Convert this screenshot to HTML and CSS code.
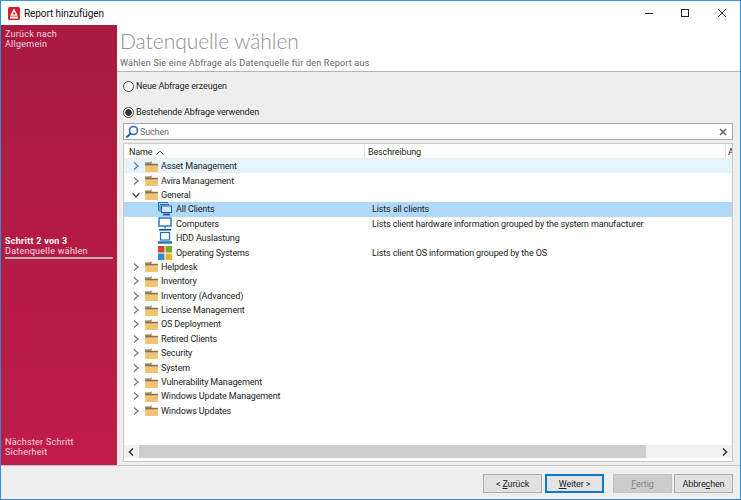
FILE: index.html
```html
<!DOCTYPE html>
<html lang="de">
<head>
<meta charset="utf-8">
<title>Report hinzufügen</title>
<link rel="stylesheet" href="styles.css">
</head>
<body>
<div class="window">
  <header class="titlebar">
    <svg class="app-icon" width="12" height="13" viewBox="0 0 12 13"><rect width="12" height="13" rx="1.5" fill="#d8202a"/><path d="M6 1.5L2.2 8.8H9.8ZM6 4.4L4.5 7.4H7.5Z" fill="#fff" fill-rule="evenodd"/><rect x="2" y="9.5" width="8" height="2" fill="#fff"/></svg>
    <span class="title">Report hinzufügen</span>
    <div class="winctl">
      <svg width="10" height="10" viewBox="0 0 10 10"><path d="M0 5.5H8" stroke="#222" fill="none"/></svg>
      <svg width="10" height="10" viewBox="0 0 10 10"><rect x=".5" y="1.5" width="7" height="7" stroke="#222" fill="none"/></svg>
      <svg width="10" height="10" viewBox="0 0 10 10"><path d="M1 1L9 9M9 1L1 9" stroke="#333" fill="none"/></svg>
    </div>
  </header>
  <div class="main">
    <aside class="sidebar">
      <div class="side-block"><div>Zurück nach</div><div>Allgemein</div></div>
      <div class="side-current"><div class="side-strong">Schritt 2 von 3</div><div>Datenquelle wählen</div></div>
      <div class="side-block"><div>Nächster Schritt</div><div>Sicherheit</div></div>
    </aside>
    <section class="content">
      <div class="head">
        <h1>Datenquelle wählen</h1>
        <p>Wählen Sie eine Abfrage als Datenquelle für den Report aus</p>
      </div>
      <div class="body">
        <label class="radio first"><span class="dot"></span>Neue Abfrage erzeugen</label>
        <label class="radio second"><span class="dot on"></span>Bestehende Abfrage verwenden</label>
        <div class="search">
          <svg width="14" height="14" viewBox="0 0 14 14"><circle cx="8.5" cy="5.5" r="4" fill="none" stroke="#2a6fb0" stroke-width="1.6"/><path d="M5.5 8.5L1.5 12.5" stroke="#1f5f9f" stroke-width="2"/></svg>
          <span class="search-text">Suchen</span>
          <svg class="clear" width="8" height="8" viewBox="0 0 8 8"><path d="M1 1L7 7M7 1L1 7" stroke="#666" stroke-width="1.6"/></svg>
        </div>
        <div class="tree">
          <div class="thead">
            <div class="th name">Name <svg width="8" height="5" viewBox="0 0 8 5"><path d="M.5 4.5L4 1L7.5 4.5" fill="none" stroke="#666"/></svg></div>
            <div class="th desc">Beschreibung</div>
            <div class="th extra">A</div>
          </div>
          <div class="rows">
            <div class="row hover"><svg class="chev" viewBox="0 0 8 8"><path d="M2 0.5L6 4L2 7.5" fill="none" stroke="#777" stroke-width="1.2"/></svg><svg class="folder" viewBox="0 0 14 12"><use href="#f"/></svg><span class="label">Asset Management</span></div>
            <div class="row"><svg class="chev" viewBox="0 0 8 8"><path d="M2 0.5L6 4L2 7.5" fill="none" stroke="#777" stroke-width="1.2"/></svg><svg class="folder" viewBox="0 0 14 12"><use href="#f"/></svg><span class="label">Avira Management</span></div>
            <div class="row"><svg class="chev" viewBox="0 0 8 8"><path d="M0.5 2L4 6L7.5 2" fill="none" stroke="#444" stroke-width="1.2"/></svg><svg class="folder" viewBox="0 0 14 12"><use href="#f"/></svg><span class="label">General</span></div>
            <div class="row child selected">
              <svg class="item" viewBox="0 0 14 14"><path d="M.5 8.5V.5H10" fill="none" stroke="#1f6fb5"/><path d="M2 10V2.5H11" fill="none" stroke="#1f6fb5"/><rect x="3.5" y="4" width="10" height="6.5" fill="#cfe4f7" stroke="#1f5f9f"/><path d="M5 12.5H12" stroke="#1f5f9f" stroke-width="2"/></svg>
              <span class="label">All Clients</span><span class="desc-cell">Lists all clients</span></div>
            <div class="row child">
              <svg class="item" viewBox="0 0 14 14"><rect x="1" y="1" width="12" height="8" fill="#fff" stroke="#1f6fb5" stroke-width="1.4"/><path d="M7 9.5V11.5" stroke="#1f6fb5" stroke-width="1.5"/><path d="M1 12.8H13" stroke="#17518a" stroke-width="1.6"/></svg>
              <span class="label">Computers</span><span class="desc-cell">Lists client hardware information grouped by the system manufacturer</span></div>
            <div class="row child">
              <svg class="item" viewBox="0 0 14 14"><rect x="2.5" y="1.5" width="9" height="7.5" fill="#fff" stroke="#1f6fb5" stroke-width="1.2"/><path d="M0 11.5H14" stroke="#1f6fb5" stroke-width="2.4"/></svg>
              <span class="label">HDD Auslastung</span></div>
            <div class="row child">
              <svg class="item" viewBox="0 0 14 14"><rect width="6.5" height="6.5" fill="#d9432f"/><rect x="7.5" width="6.5" height="6.5" fill="#6fae2c"/><rect y="7.5" width="6.5" height="6.5" fill="#2a8fd8"/><rect x="7.5" y="7.5" width="6.5" height="6.5" fill="#f2b21c"/></svg>
              <span class="label">Operating Systems</span><span class="desc-cell">Lists client OS information grouped by the OS</span></div>
            <div class="row"><svg class="chev" viewBox="0 0 8 8"><path d="M2 0.5L6 4L2 7.5" fill="none" stroke="#777" stroke-width="1.2"/></svg><svg class="folder" viewBox="0 0 14 12"><use href="#f"/></svg><span class="label">Helpdesk</span></div>
            <div class="row"><svg class="chev" viewBox="0 0 8 8"><path d="M2 0.5L6 4L2 7.5" fill="none" stroke="#777" stroke-width="1.2"/></svg><svg class="folder" viewBox="0 0 14 12"><use href="#f"/></svg><span class="label">Inventory</span></div>
            <div class="row"><svg class="chev" viewBox="0 0 8 8"><path d="M2 0.5L6 4L2 7.5" fill="none" stroke="#777" stroke-width="1.2"/></svg><svg class="folder" viewBox="0 0 14 12"><use href="#f"/></svg><span class="label">Inventory (Advanced)</span></div>
            <div class="row"><svg class="chev" viewBox="0 0 8 8"><path d="M2 0.5L6 4L2 7.5" fill="none" stroke="#777" stroke-width="1.2"/></svg><svg class="folder" viewBox="0 0 14 12"><use href="#f"/></svg><span class="label">License Management</span></div>
            <div class="row"><svg class="chev" viewBox="0 0 8 8"><path d="M2 0.5L6 4L2 7.5" fill="none" stroke="#777" stroke-width="1.2"/></svg><svg class="folder" viewBox="0 0 14 12"><use href="#f"/></svg><span class="label">OS Deployment</span></div>
            <div class="row"><svg class="chev" viewBox="0 0 8 8"><path d="M2 0.5L6 4L2 7.5" fill="none" stroke="#777" stroke-width="1.2"/></svg><svg class="folder" viewBox="0 0 14 12"><use href="#f"/></svg><span class="label">Retired Clients</span></div>
            <div class="row"><svg class="chev" viewBox="0 0 8 8"><path d="M2 0.5L6 4L2 7.5" fill="none" stroke="#777" stroke-width="1.2"/></svg><svg class="folder" viewBox="0 0 14 12"><use href="#f"/></svg><span class="label">Security</span></div>
            <div class="row"><svg class="chev" viewBox="0 0 8 8"><path d="M2 0.5L6 4L2 7.5" fill="none" stroke="#777" stroke-width="1.2"/></svg><svg class="folder" viewBox="0 0 14 12"><use href="#f"/></svg><span class="label">System</span></div>
            <div class="row"><svg class="chev" viewBox="0 0 8 8"><path d="M2 0.5L6 4L2 7.5" fill="none" stroke="#777" stroke-width="1.2"/></svg><svg class="folder" viewBox="0 0 14 12"><use href="#f"/></svg><span class="label">Vulnerability Management</span></div>
            <div class="row"><svg class="chev" viewBox="0 0 8 8"><path d="M2 0.5L6 4L2 7.5" fill="none" stroke="#777" stroke-width="1.2"/></svg><svg class="folder" viewBox="0 0 14 12"><use href="#f"/></svg><span class="label">Windows Update Management</span></div>
            <div class="row"><svg class="chev" viewBox="0 0 8 8"><path d="M2 0.5L6 4L2 7.5" fill="none" stroke="#777" stroke-width="1.2"/></svg><svg class="folder" viewBox="0 0 14 12"><use href="#f"/></svg><span class="label">Windows Updates</span></div>
          </div>
          <div class="hscroll">
            <svg class="arrow" width="6" height="8" viewBox="0 0 6 8"><path d="M5 .5L1.5 4L5 7.5" fill="none" stroke="#333" stroke-width="1.5"/></svg>
            <div class="thumb"></div>
            <svg class="arrow" width="6" height="8" viewBox="0 0 6 8"><path d="M1 .5L4.5 4L1 7.5" fill="none" stroke="#333" stroke-width="1.5"/></svg>
          </div>
        </div>
      </div>
    </section>
  </div>
  <footer class="footer">
    <button class="btn">&lt; <u>Z</u>urück</button>
    <button class="btn primary"><u>W</u>eiter &gt;</button>
    <button class="btn disabled"><u>F</u>ertig</button>
    <button class="btn">Abbre<u>c</u>hen</button>
  </footer>
</div>
<svg class="defs" width="0" height="0"><defs><g id="f"><path d="M0 1.5H5.5L7 0V3H0Z" fill="#8a6a3a"/><path d="M0 3H14V5H0Z" fill="#8a6f42"/><path d="M0 5.5H14V12H0Z" fill="#f2c36e"/></g></defs></svg>
</body>
</html>
```
FILE: styles.css
```css
* { box-sizing: border-box; }
html, body { margin: 0; height: 100%; }
body { font-family: Roboto, "Liberation Sans", sans-serif; font-size: 9px; letter-spacing: -.14px; color: #222; background: #fff; }
.defs { display: block; height: 0; }
.window { width: 741px; height: 500px; display: flex; flex-direction: column; border: 1px solid #2b8fd8; border-top-color: #3a97dc; background: #eee; overflow: hidden; }
.titlebar { height: 24px; flex: none; background: #fff; display: flex; align-items: center; padding-left: 7px; }
.app-icon { flex: none; }
.title { margin-left: 4px; font-size: 10px; letter-spacing: -.1px; color: #111; }
.winctl { margin-left: auto; display: flex; gap: 26px; padding-right: 13px; }
.main { flex: 1; display: flex; min-height: 0; }
.sidebar { width: 116px; flex: none; background: linear-gradient(#a81a3e, #c01c48); color: #f4d9e2; padding: 4px 4px 8px 4px; display: flex; flex-direction: column; justify-content: space-between; font-size: 9px; line-height: 10px; letter-spacing: .25px; }
.side-current { color: #f6dde5; border-bottom: 2px solid #bcb0b3; padding-bottom: 1px; margin-top: 9px; }
.side-strong { color: #fff; font-weight: 700; }
.content { flex: 1; display: flex; flex-direction: column; min-width: 0; }
.head { height: 47px; flex: none; background: #fff; border-bottom: 1px solid #b4b4b4; padding: 2px 0 0 3px; }
.head h1 { margin: 0; font-family: Lato, Roboto, sans-serif; font-weight: 300; font-size: 21px; letter-spacing: -.05px; line-height: 27px; color: #8f8f8f; }
.head p { margin: 4px 0 0; font-size: 9px; line-height: 11px; color: #666; letter-spacing: .22px; }
.body { flex: 1; display: flex; flex-direction: column; padding: 0 7px 3px 6px; min-height: 0; }
.radio { display: flex; align-items: center; gap: 2px; height: 14px; color: #222; }
.radio.first { margin-top: 7px; }
.radio.second { margin-top: 12px; }
.dot { width: 11px; height: 11px; border: 1px solid #444; border-radius: 50%; background: #fff; display: block; position: relative; }
.dot.on { background: radial-gradient(circle, #333 0 3px, #fff 3.6px); }
.search { height: 17px; margin-top: 4px; flex: none; background: #fff; border: 1px solid #a8a8a8; display: flex; align-items: center; padding: 0 5px 0 1px; }
.search-text { color: #666; margin-left: 1px; }
.clear { margin-left: auto; }
.tree { flex: 1; margin-top: 3px; background: #fff; border: 1px solid #c8c8c8; display: flex; flex-direction: column; min-height: 0; }
.thead { height: 15px; flex: none; display: flex; align-items: center; border-bottom: 1px solid #eee; }
.th { height: 100%; display: flex; align-items: center; border-right: 1px solid #e2e2e2; padding: 2px 0 0 5px; gap: 4px; }
.th.name { width: 241px; }
.th.desc { width: 361px; padding-left: 3px; }
.th.extra { flex: 1; border: 0; padding-left: 2px; overflow: hidden; }
.rows { flex: 1; }
.row { height: 14.4px; display: flex; align-items: center; padding-left: 8px; position: relative; white-space: nowrap; }
.row.hover { background: #e5f3fb; }
.row.selected { background: #b0d8f8; }
.row.child { padding-left: 34px; }
.chev { width: 8px; height: 8px; flex: none; }
.folder { width: 13px; height: 11px; margin-left: 5px; flex: none; }
.item { width: 14px; height: 14px; flex: none; }
.label { margin-left: 3px; }
.child .label { margin-left: 4px; }
.desc-cell { position: absolute; left: 248px; }
.hscroll { height: 13px; flex: none; margin-bottom: 3px; background: #f0f0f0; display: flex; align-items: center; justify-content: space-between; padding: 0 4px; }
.thumb { height: 100%; flex: 1; margin: 0 auto 0 5px; max-width: 507px; background: #cdcdcd; }
.footer { height: 34px; flex: none; border-top: 1px solid #c4c4c4; display: flex; justify-content: flex-end; align-items: center; padding: 2px 7px 0 0; }
.btn { width: 59px; height: 19px; padding: 0; background: #e1e1e1; border: 1px solid #adadad; font: inherit; letter-spacing: inherit; color: #222; margin-left: 2px; }
.btn.primary { background: #e3e3e3; border: 2px solid #0f78c8; margin-left: 3px; }
.btn.disabled { background: #cccccc; border-color: #c4c4c4; color: #838383; margin-left: 9px; }
```
